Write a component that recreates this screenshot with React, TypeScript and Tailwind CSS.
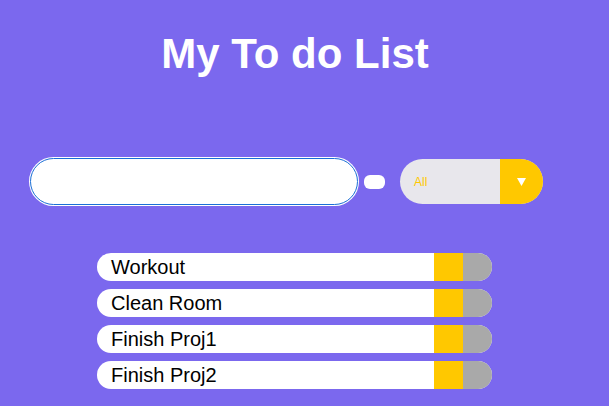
import React from "react";

const todos: string[] = ["Workout", "Clean Room", "Finish Proj1", "Finish Proj2"];

const TodoItem: React.FC<{ text: string }> = ({ text }) => {
  return (
    <li className="flex h-[28px] w-full items-center overflow-hidden rounded-full bg-white">
      <span className="flex-1 pl-[14px] text-[20px] leading-none text-black">{text}</span>
      <button className="h-full w-[29px] bg-[#ffc800]" aria-label="complete" />
      <button className="h-full w-[29px] bg-[#a9a9a9]" aria-label="delete" />
    </li>
  );
};

const App: React.FC = () => {
  return (
    <div
      className="h-[406px] w-[609px] overflow-hidden bg-[#7b68ee] pr-[19px]"
      style={{ fontFamily: '"Liberation Sans", Arial, sans-serif' }}
    >
      <h1 className="pt-[30px] text-center text-[42px] font-bold leading-[48px] text-white">
        My To do List
      </h1>

      <form className="mt-[80px] flex items-center pl-[30px]" onSubmit={(e) => e.preventDefault()}>
        <input
          type="text"
          className="h-[47px] w-[328px] rounded-full border border-[#1a6fd6] bg-white ring-1 ring-white outline-none"
        />
        <button type="submit" className="ml-[6px] h-[14px] w-[21px] rounded-[6px] bg-white" />
        <div className="ml-[15px] flex h-[45px] w-[143px] overflow-hidden rounded-full bg-[#e8e7ec]">
          <span className="flex flex-1 items-center pl-[14px] text-[12px] text-[#ffc800]">All</span>
          <span className="flex w-[43px] items-center justify-center bg-[#ffc800]">
            <svg width="9" height="8" viewBox="0 0 9 8">
              <path d="M0 0H9L4.5 8Z" fill="white" />
            </svg>
          </span>
        </div>
      </form>

      <ul className="ml-[97px] mt-[48px] flex w-[395px] flex-col gap-[8px]">
        {todos.map((t) => (
          <TodoItem key={t} text={t} />
        ))}
      </ul>
    </div>
  );
};

export default App;
